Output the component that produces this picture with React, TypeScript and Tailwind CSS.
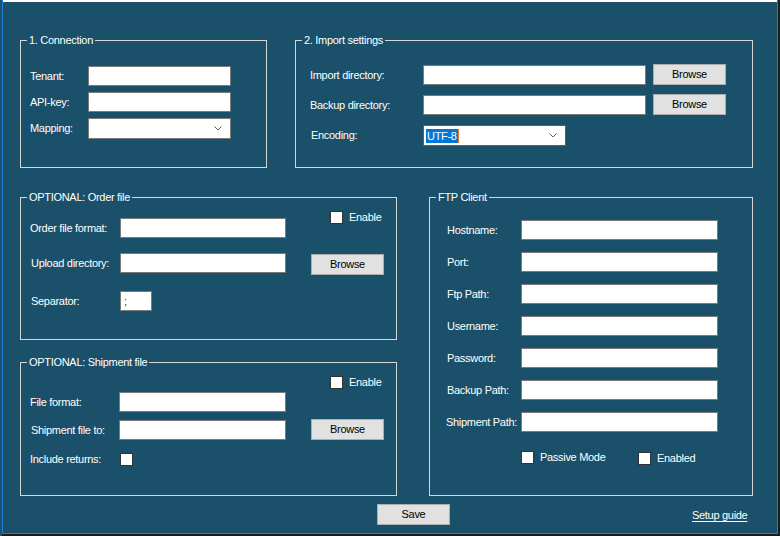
import type { ReactNode } from 'react'

function GroupBox({ title, className, children }: { title: string; className: string; children: ReactNode }) {
  return (
    <fieldset className={`border border-[#d6d6d6] ${className}`}>
      <legend className="ml-[6px] px-[2px] leading-[13px] text-white">{title}</legend>
      {children}
    </fieldset>
  )
}

function TextBox({ className = '', value }: { className?: string; value?: string }) {
  return (
    <input
      type="text"
      readOnly
      value={value ?? ''}
      className={`h-[20px] shrink-0 border border-[#7a7a7a] bg-white px-[3px] text-[#4b1a55] outline-none ${className}`}
    />
  )
}

function Chevron() {
  return (
    <svg width="8" height="5" viewBox="0 0 8 5" className="shrink-0">
      <path d="M0.5 0.5 L4 4 L7.5 0.5" stroke="#5f5f5f" strokeWidth="1" fill="none" />
    </svg>
  )
}

function ComboBox({ className = '', focused, children }: { className?: string; focused?: boolean; children?: ReactNode }) {
  return (
    <div
      className={`flex h-[21px] shrink-0 items-center border bg-white pl-[2px] pr-[8px] ${
        focused ? 'border-[#0078d7]' : 'border-[#7a7a7a]'
      } ${className}`}
    >
      <div className="flex flex-1 items-center">{children}</div>
      <Chevron />
    </div>
  )
}

function Button({ label, className = '' }: { label: string; className?: string }) {
  return (
    <button className={`h-[21px] w-[73px] shrink-0 border border-[#adadad] bg-[#e1e1e1] text-black ${className}`}>
      {label}
    </button>
  )
}

function CheckBox({ label, className = '' }: { label?: string; className?: string }) {
  return (
    <label className={`flex items-center gap-[6px] ${className}`}>
      <span className="h-[13px] w-[13px] shrink-0 border border-[#333333] bg-white" />
      {label && <span className="leading-[13px] text-white">{label}</span>}
    </label>
  )
}

const ftpFields = ['Hostname:', 'Port:', 'Ftp Path:', 'Username:', 'Password:', 'Backup Path:', 'Shipment Path:']

export default function App() {
  return (
    <div className="flex h-[536px] w-[780px] overflow-hidden bg-[#1c1c1c] font-['Liberation_Sans',Arial,sans-serif] text-[11px] tracking-[-0.3px] text-white">
      <div className="h-full w-[2px] bg-[#24506a]" />
      <div className="flex h-[534px] w-[776px] flex-col border-x border-b border-[#1a7fd6] bg-[#1a5069]">
        <div className="h-[2px] bg-white" />
        <div className="flex flex-col pl-[17px] pt-[32px]">
          {/* top row */}
          <div className="flex gap-[28px]">
            <GroupBox title="1. Connection" className="h-[134px] w-[247px]">
              <div className="flex flex-col gap-[6px] pl-[9px] pt-[19px]">
                <div className="flex items-center">
                  <span className="w-[58px] shrink-0">Tenant:</span>
                  <TextBox className="w-[143px]" />
                </div>
                <div className="flex items-center">
                  <span className="w-[58px] shrink-0">API-key:</span>
                  <TextBox className="w-[143px]" />
                </div>
                <div className="flex items-center">
                  <span className="w-[58px] shrink-0">Mapping:</span>
                  <ComboBox className="w-[143px]" />
                </div>
              </div>
            </GroupBox>

            <GroupBox title="2. Import settings" className="h-[134px] w-[458px]">
              <div className="flex flex-col gap-[9px] pl-[14px] pt-[17px]">
                <div className="flex items-start">
                  <span className="mt-[1px] w-[113px] shrink-0 leading-[20px]">Import directory:</span>
                  <TextBox className="mt-[1px] w-[223px]" />
                  <Button label="Browse" className="ml-[7px]" />
                </div>
                <div className="flex items-start">
                  <span className="mt-[1px] w-[113px] shrink-0 leading-[20px]">Backup directory:</span>
                  <TextBox className="mt-[1px] w-[223px]" />
                  <Button label="Browse" className="ml-[7px]" />
                </div>
                <div className="flex items-start">
                  <span className="ml-[1px] mt-[1px] w-[112px] shrink-0 leading-[21px]">Encoding:</span>
                  <ComboBox className="mt-[1px] w-[143px]" focused>
                    <span className="flex items-center bg-[#0078d7] px-[1px] leading-[14px] text-white">UTF-8</span>
                    <span className="h-[14px] w-[1px] bg-[#e87722]" />
                  </ComboBox>
                </div>
              </div>
            </GroupBox>
          </div>

          {/* middle row */}
          <div className="mt-[23px] flex gap-[32px]">
            <div className="flex flex-col gap-[16px]">
              <GroupBox title="OPTIONAL: Order file" className="h-[149px] w-[377px]">
                <div className="flex flex-col pl-[9px] pt-[7px]">
                  <div className="flex items-start">
                    <div className="mt-[7px] flex items-center">
                      <span className="w-[90px] shrink-0">Order file format:</span>
                      <TextBox className="w-[166px]" />
                    </div>
                    <CheckBox label="Enable" className="ml-[44px]" />
                  </div>
                  <div className="mt-[15px] flex items-start">
                    <span className="ml-[1px] w-[89px] shrink-0 leading-[20px]">Upload directory:</span>
                    <TextBox className="w-[166px]" />
                    <Button label="Browse" className="ml-[25px] mt-[1px]" />
                  </div>
                  <div className="mt-[16px] flex items-center">
                    <span className="ml-[1px] w-[89px] shrink-0">Separator:</span>
                    <TextBox className="w-[32px]" value=";" />
                  </div>
                </div>
              </GroupBox>

              <GroupBox title="OPTIONAL: Shipment file" className="h-[140px] w-[377px]">
                <div className="flex flex-col pl-[9px] pt-[7px]">
                  <CheckBox label="Enable" className="ml-[300px]" />
                  <div className="mt-[3px] flex items-center">
                    <span className="w-[89px] shrink-0">File format:</span>
                    <TextBox className="w-[167px]" />
                  </div>
                  <div className="mt-[7px] flex items-start">
                    <span className="ml-[1px] mt-[1px] w-[88px] shrink-0 leading-[20px]">Shipment file to:</span>
                    <TextBox className="mt-[1px] w-[167px]" />
                    <Button label="Browse" className="ml-[25px]" />
                  </div>
                  <div className="mt-[13px] flex items-center">
                    <span className="w-[90px] shrink-0 leading-[13px]">Include returns:</span>
                    <CheckBox />
                  </div>
                </div>
              </GroupBox>
            </div>

            <GroupBox title="FTP Client" className="h-[305px] w-[324px]">
              <div className="flex flex-col gap-[12px] pl-[17px] pt-[16px]">
                {ftpFields.map((f) => (
                  <div key={f} className="flex items-center">
                    <span className={`shrink-0 ${f === 'Shipment Path:' ? '-ml-[1px] w-[75px]' : 'w-[74px]'}`}>{f}</span>
                    <TextBox className="w-[197px]" />
                  </div>
                ))}
                <div className="ml-[74px] mt-[7px] flex items-start">
                  <CheckBox label="Passive Mode" className="w-[117px]" />
                  <CheckBox label="Enabled" className="mt-[1px]" />
                </div>
              </div>
            </GroupBox>
          </div>

          {/* bottom row */}
          <div className="mt-[8px] flex items-start">
            <Button label="Save" className="ml-[357px]" />
            <a className="ml-[242px] mt-[5px] leading-[13px] text-white underline underline-offset-[2px]">Setup guide</a>
          </div>
        </div>
      </div>
    </div>
  )
}
